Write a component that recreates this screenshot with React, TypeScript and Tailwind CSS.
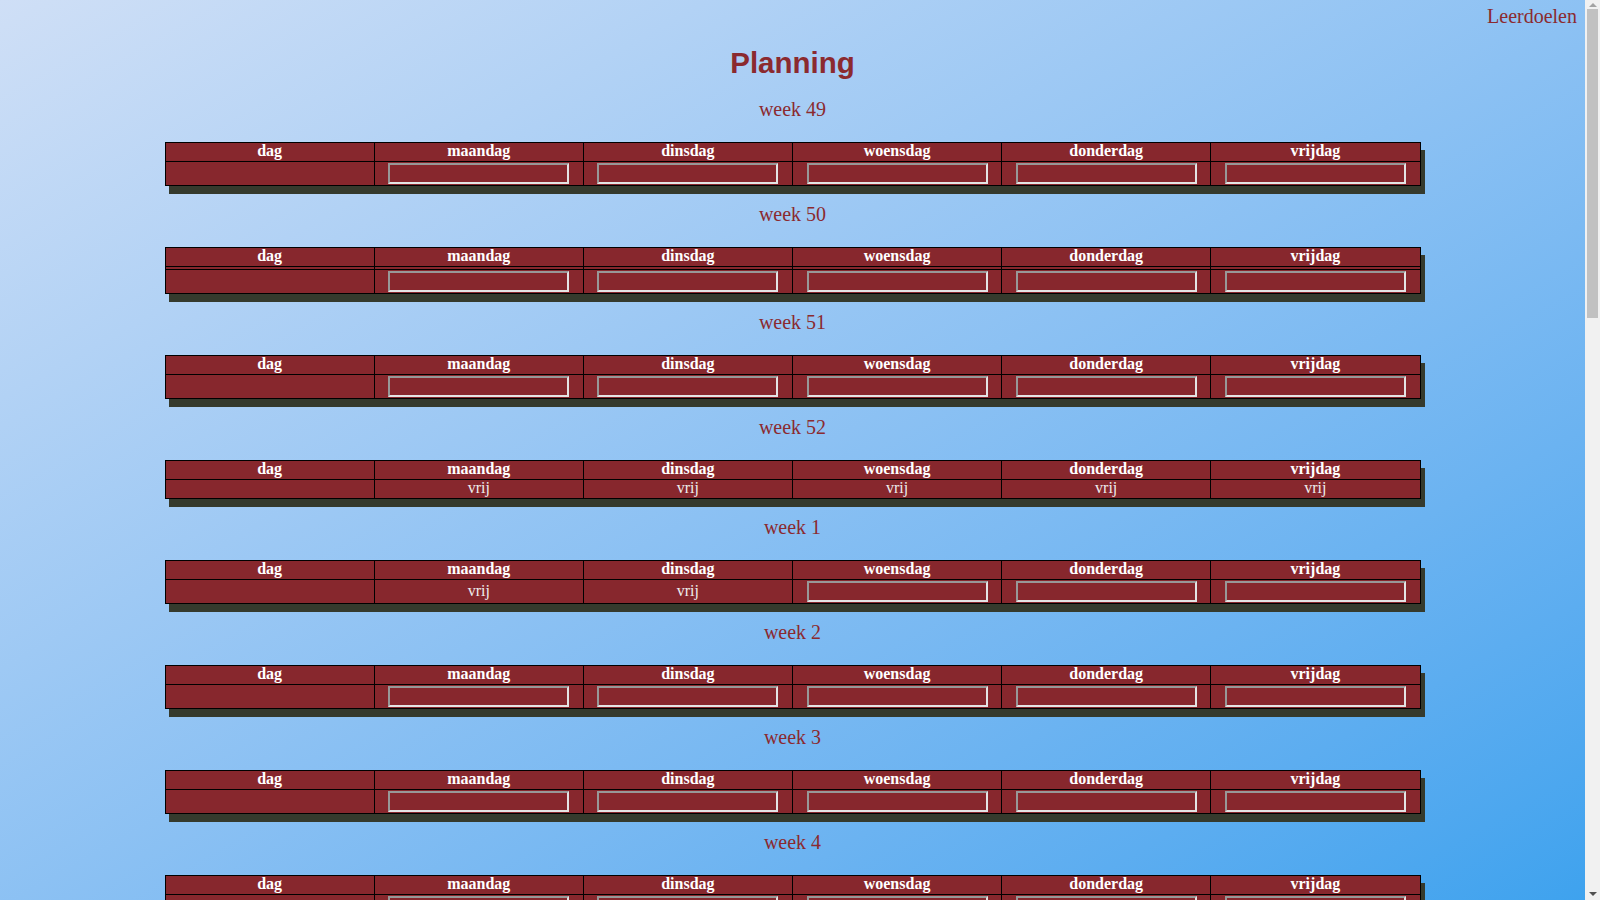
import React from 'react';

const dagen = ['maandag', 'dinsdag', 'woensdag', 'donderdag', 'vrijdag'];

type Week = {
  nr: number;
  vrij: boolean[];
  extraRow?: boolean;
};

const weken: Week[] = [
  { nr: 49, vrij: [false, false, false, false, false] },
  { nr: 50, vrij: [false, false, false, false, false], extraRow: true },
  { nr: 51, vrij: [false, false, false, false, false] },
  { nr: 52, vrij: [true, true, true, true, true] },
  { nr: 1, vrij: [true, true, false, false, false] },
  ...Array.from({ length: 18 }, (_, i) => ({
    nr: i + 2,
    vrij: [false, false, false, false, false],
  })),
];

const WeekTabel = ({ week }: { week: Week }) => (
  <>
    <div className="mt-[17px] mb-[21px] text-center text-[20px] leading-[23px] text-[#8b2a2f]">
      week {week.nr}
    </div>
    <table className="mx-auto w-[1256px] table-fixed border-collapse border border-black bg-[#87272d] shadow-[4px_8px_0_#353a2d]">
      <thead>
        <tr>
          <th className="border border-black px-px pt-0 pb-[2px] text-center text-[16px] leading-[16px] font-bold text-white">
            dag
          </th>
          {dagen.map((d) => (
            <th
              key={d}
              className="border border-black px-px pt-0 pb-[2px] text-center text-[16px] leading-[16px] font-bold text-white"
            >
              {d}
            </th>
          ))}
        </tr>
      </thead>
      <tbody>
        {week.extraRow && (
          <tr>
            <td className="border border-black p-px" />
            {dagen.map((d) => (
              <td key={d} className="border border-black p-px" />
            ))}
          </tr>
        )}
        <tr>
          <td className="border border-black p-px" />
          {dagen.map((d, i) => (
            <td
              key={d}
              className={
                week.vrij[i]
                  ? 'border border-black px-px pt-0 pb-[2px] text-center text-[16px] leading-[16px] text-[#eee]'
                  : 'border border-black p-px text-center text-[16px] leading-[16px] text-[#eee]'
              }
            >
              {week.vrij[i] ? (
                'vrij'
              ) : (
                <input
                  type="text"
                  className="mx-auto block h-[21px] w-[181px] border-2 border-t-[#989898] border-l-[#989898] border-r-[#e4e4e4] border-b-[#e4e4e4] bg-transparent px-0.5 text-white outline-none"
                />
              )}
            </td>
          ))}
        </tr>
      </tbody>
    </table>
  </>
);

// scrollbalk zoals in de browser
const Scrollbalk = () => (
  <div className="sticky top-0 flex h-screen w-[15px] shrink-0 flex-col items-center bg-[#f1f1f1]">
    <div className="flex h-[9px] w-full items-center justify-center">
      <div className="h-0 w-0 border-x-[4px] border-b-[4px] border-x-transparent border-b-[#a3a3a3]" />
    </div>
    <div className="h-[309px] w-[11px] bg-[#c1c1c1]" />
    <div className="flex-1" />
    <div className="flex h-[12px] w-full items-center justify-center">
      <div className="h-0 w-0 border-x-[4px] border-t-[4px] border-x-transparent border-t-[#505050]" />
    </div>
  </div>
);

export default function App() {
  return (
    <div className="flex items-start bg-linear-to-br from-[#cfdff6] to-[#3da2ee] bg-fixed">
      <div className="min-h-screen min-w-0 flex-1 px-2 pb-[27px] font-['Liberation_Serif',serif]">
        <div className="flex justify-end pt-[5px] text-[20px] leading-[23px] text-[#8b2a2f]">
          <a href="#" className="text-[#8b2a2f]">
            Leerdoelen
          </a>
        </div>
        <h1 className="mt-[17px] text-center font-['Liberation_Sans',Arial,sans-serif] text-[29.5px] leading-[36px] font-bold text-[#8b2a2f]">
          Planning
        </h1>
        {weken.map((w) => (
          <WeekTabel key={w.nr} week={w} />
        ))}
      </div>
      <Scrollbalk />
    </div>
  );
}
